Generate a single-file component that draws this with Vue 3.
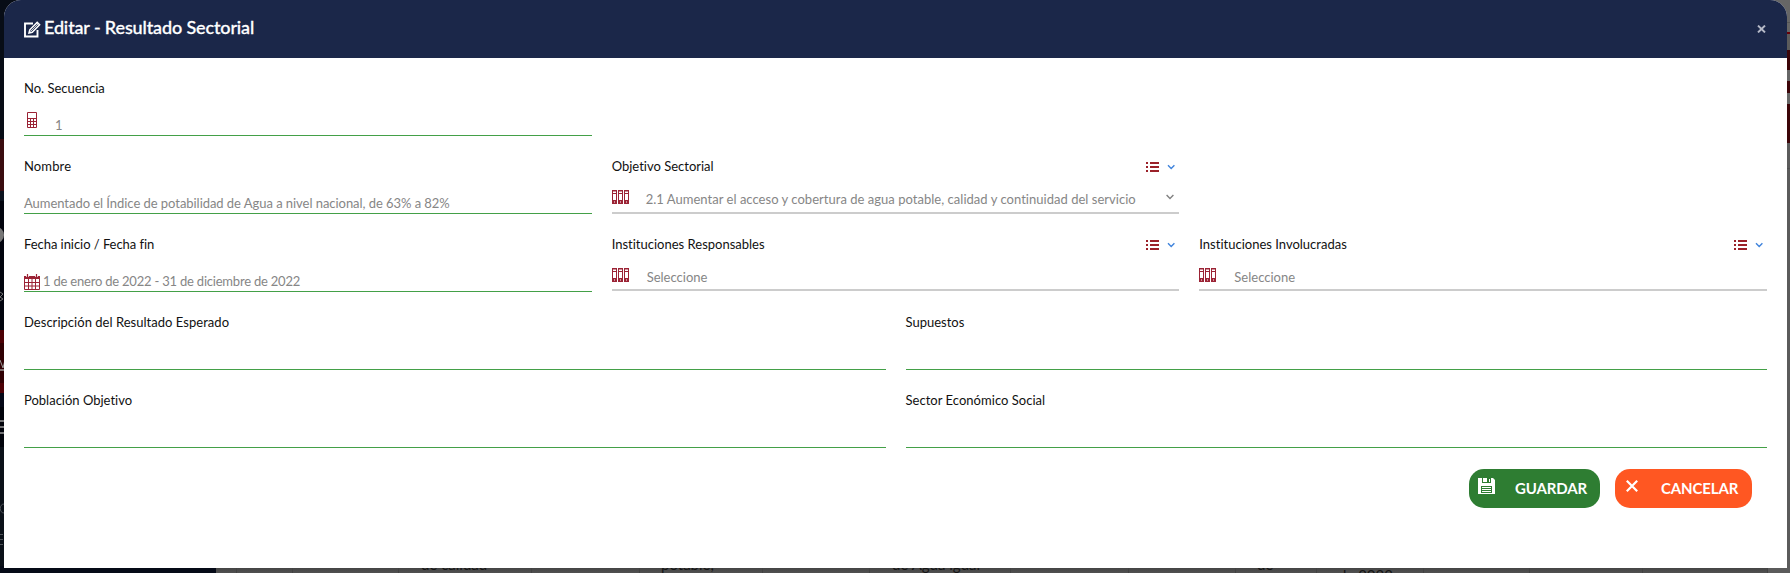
<script setup>
import { h } from 'vue'

const cells = [
  { left: 20 }, { left: 76 }, { left: 182, text: 'de calidad', tx: 205 },
  { left: 315 }, { left: 423, text: 'potable,', tx: 445 }, { left: 546 }, { left: 653, text: 'de Agua igual', tx: 676 },
  { left: 794 }, { left: 912 }, { left: 1019, text: 'de', tx: 1041 }, { left: 1100 },
  { left: 1207 }, { left: 1313 }, { left: 1426 }, { left: 1551 }
]

const Binders = () =>
  h('svg', { viewBox: '0 0 18 15', width: 18, height: 15, fill: 'none', stroke: '#9b2335' },
    [0, 6, 12].map((x) => h('g', { transform: `translate(${x} 0)` }, [
      h('rect', { x: 0.5, y: 0.5, width: 4, height: 13 }),
      h('path', { d: 'M.5 1h4M.5 3.5h4' }),
      h('rect', { x: 0.5, y: 10.5, width: 4, height: 3, fill: '#9b2335' }),
      h('rect', { x: 2, y: 11.5, width: 1, height: 1, fill: '#fff', stroke: 'none' })
    ])))

const ListMenu = () =>
  h('svg', { viewBox: '0 0 32 12', width: 32, height: 12 }, [
    h('path', { d: 'M0 1h2v2H0zM4 1h9v2H4zM0 5h2v2H0zM4 5h9v2H4zM0 9h2v2H0zM4 9h9v2H4z', fill: '#9b2129' }),
    h('path', { d: 'M22 4.3l3.2 3.2 3.2-3.2', fill: 'none', stroke: '#3f83dc', 'stroke-width': 1.4 })
  ])
</script>

<template>
  <div class="page">
    <div class="side-strip">
      <svg width="4" height="573" viewBox="0 0 4 573" fill="none" stroke="#777">
        <circle cx="-4" cy="235" r="8" fill="#777" stroke="none" />
        <path d="M0 292l3 2-3 3 3 2-3 2" />
        <path d="M0 360l3 8 2-8" stroke="#999" />
        <path d="M0 370h4M0 421h4M0 427h4M0 433h4" stroke="#999" stroke-width="1.5" />
        <path d="M4 504c-5 0-5 9 0 9M0 534.5h3M0 539.5h3M0 544.5h3" stroke="#50545a" />
      </svg>
    </div>
    <div class="table-strip">
      <i v-for="c in cells" :key="c.left" :style="{ left: c.left + 'px' }"></i>
      <template v-for="c in cells" :key="'t' + c.left">
        <span v-if="c.text" :style="{ left: c.tx + 'px' }">{{ c.text }}</span>
      </template>
      <span class="year">de 2022</span>
    </div>
    <div class="right-strip"></div>

    <section class="modal">
      <header>
        <svg class="edit" viewBox="0 0 17 17" width="17" height="17" fill="none" stroke="#fff">
          <path d="M9 2.500H1v13h12.500V9" stroke-width="1.900" />
          <path d="M5 12l.8-3.200 7.400-7.400 2.400 2.400-7.400 7.400z" stroke-width="1.500" />
          <path d="M6.500 10.500l7.500-7.500" stroke-width=".8" />
        </svg>
        <h1>Editar - Resultado Sectorial</h1>
        <svg class="close" viewBox="0 0 9 8" width="9" height="8"><path d="M1 .6l7 6.8M8 .6L1 7.400" stroke="#b4b8c6" stroke-width="2" /></svg>
      </header>

      <main>
        <div class="field third first">
          <label class="l1">No. Secuencia</label>
          <div class="control">
            <svg class="calc" viewBox="0 0 11 16" width="11" height="16" fill="none" stroke="#9b2335">
              <path d="M.5.5h9v15h-9zM.5 6.500h9M.5 9.500h9M.5 12.500h9M3.500 6.500v9M6.500 6.500v9" />
            </svg>
            <span>1</span>
          </div>
        </div>
        <div class="field third start">
          <label class="l2">Nombre</label>
          <div class="control"><span class="v1">Aumentado el Índice de potabilidad de Agua a nivel nacional, de 63% a 82%</span></div>
        </div>
        <div class="field third">
          <label>Objetivo Sectorial</label><ListMenu class="menu" />
          <div class="control select">
            <Binders class="binders" /><span class="v2">2.1 Aumentar el acceso y cobertura de agua potable, calidad y continuidad del servicio</span>
            <svg class="caret" viewBox="0 0 8 6" width="8" height="6"><path d="M.6 1L4 4.400 7.400 1" fill="none" stroke="#808080" stroke-width="1.400" /></svg>
          </div>
        </div>
        <div class="field third start">
          <label class="l4">Fecha inicio / Fecha fin</label>
          <div class="control">
            <svg class="cal" viewBox="0 0 16 16" width="16" height="16" fill="none" stroke="#9b2335">
              <path d="M.5 4.500h15v11H.5zM.5 8.500h15M.5 12h15M4.500 5v10M8 5v10M11.500 5v10" />
              <path d="M0 2h16v3H0z" fill="#9b2335" stroke="none" />
              <path d="M3.500 0v3M12.500 0v3" stroke="#fff" stroke-width="2.600" />
              <path d="M3.500 0v3M12.500 0v3" stroke-width="1.200" />
            </svg>
            <span class="v3">1 de enero de 2022 - 31 de diciembre de 2022</span>
          </div>
        </div>
        <div class="field third">
          <label>Instituciones Responsables</label><ListMenu class="menu" />
          <div class="control select empty"><Binders class="binders" /><span class="v4">Seleccione</span></div>
        </div>
        <div class="field third">
          <label>Instituciones Involucradas</label><ListMenu class="menu" />
          <div class="control select empty"><Binders class="binders" /><span class="v4">Seleccione</span></div>
        </div>
        <div class="field half"><label class="l7">Descripción del Resultado Esperado</label><div class="control"></div></div>
        <div class="field half"><label>Supuestos</label><div class="control"></div></div>
        <div class="field half"><label>Población Objetivo</label><div class="control"></div></div>
        <div class="field half"><label class="l7">Sector Económico Social</label><div class="control"></div></div>
      </main>

      <footer>
        <button class="save">
          <svg viewBox="0 0 17 16" width="17" height="16">
            <path d="M0 0h15l2 2v14H0z" fill="#fff" /><path d="M4 0h9v5H4zM3 8h11v7H3z" fill="#2e7d32" /><path d="M5 0h4v4H5zM11 1h1v3h-1zM4 9h9v1H4zM4 11h9v1H4zM4 13h9v1H4z" fill="#fff" />
          </svg>
          <span>GUARDAR</span>
        </button>
        <button class="cancel">
          <svg viewBox="0 0 12 12" width="12" height="12"><path d="M.8.8l10.400 10.400M11.200.8L.8 11.200" stroke="#fff" stroke-width="2.200" /></svg>
          <span>CANCELAR</span>
        </button>
      </footer>
    </section>
  </div>
</template>

<style>
body { margin: 0; overflow: hidden; }
</style>

<style scoped>
.page { position: relative; width: 1790px; height: 573px; overflow: hidden; background: #4d4d4d; font-family: Lato, "Open Sans", sans-serif; font-variant-ligatures: none; box-sizing: border-box; padding: 0 3px 5px 4px; }
.side-strip { position: absolute; left: 0; top: 0; width: 216px; height: 573px; background: linear-gradient(#080d16 0 139px, #3a0d10 139px 191px, #0c131e 191px 201px, #02040e 201px 330px, #4c0005 330px 343px, #300003 343px 383px, #4c0005 383px 393px, #050817 393px 407px, #01030b 407px 447px, #0b1119 447px 566px, #050a17 566px); }
.table-strip { position: absolute; left: 216px; right: 0; top: 0; bottom: 0; background: linear-gradient(#4d4d4d 567px, #444 568px, #515151 573px); overflow: hidden; }
.table-strip i { position: absolute; top: 0; bottom: 0; width: 1px; background: #424242; }
.table-strip span { position: absolute; top: 556px; font-size: 15px; line-height: 17px; color: #151515; white-space: nowrap; }
.table-strip .year { left: 1122px; top: 567px; }
.right-strip { position: absolute; right: 0; top: 0; width: 22px; height: 573px; background: linear-gradient(#666 0 22px, #555 22px 23px, #666 23px 32px, #6a0008 32px 34px, #5b5b5b 34px 50px, #3c0508 50px 70px, #666 70px 81px, #3c0508 81px 93px, #666 93px 104px, #3c0508 104px 143px, #5b5b5b 143px 168px, #505050 168px 169px, #5b5b5b 169px); }
.modal { position: relative; height: 568px; background: #fff; border-radius: 17px 17px 0 0; overflow: hidden; display: flex; flex-direction: column; }
header { height: 58px; background: #1b2749; display: flex; align-items: center; padding: 0 20px; box-sizing: border-box; flex: none; }
.edit { margin: 1px 3px 0 0; flex: none; }
h1 { margin: -4px auto 0 0; color: #fff; font-size: 18px; line-height: 24px; font-weight: 500; letter-spacing: -.13px; -webkit-text-stroke: .3px #fff; white-space: nowrap; }
.close { margin-right: 1px; }
main { display: grid; grid-template-columns: repeat(6, minmax(0, 1fr)); column-gap: 20px; grid-auto-rows: 78px; padding: 0 20px; }
.field { display: flex; flex-wrap: wrap; align-content: flex-start; justify-content: space-between; padding-top: 21px; box-sizing: border-box; }
.third { grid-column: span 2; }
.start, .first { grid-column: 1 / span 2; }
.half { grid-column: span 3; }
label { font-size: 13px; line-height: 18px; color: #111; white-space: nowrap; }
.l2 { letter-spacing: .12px; }
.l4 { letter-spacing: -.05px; }
.l7 { letter-spacing: .03px; }
.menu { margin: 4px 1px 0 0; }
.control { width: 100%; height: 39px; box-sizing: border-box; border-bottom: 1px solid #43a047; display: flex; align-items: flex-end; font-size: 13px; line-height: 18px; color: #868686; white-space: nowrap; }
.control > span { padding-bottom: 1px; }
.calc { margin: 0 17px 7px 3px; }
.cal { margin: 0 3px 1px 0; }
.v1 { letter-spacing: -.047px; }
.v2 { letter-spacing: .026px; }
.v3 { letter-spacing: -.21px; }
.select { border-bottom: 2px solid #ccc; align-items: flex-start; padding-top: 15px; }
.binders { margin-right: 16px; flex: none; }
.caret { margin: 4px 5px 0 auto; }
.empty { height: 38px; }
.empty .v4 { padding: 0 0 0 1px; }
footer { display: flex; justify-content: flex-end; gap: 15px; padding: 21px 35px 0 0; }
button { height: 39px; border: 0; border-radius: 15px; padding: 0; color: #fff; font: 700 15px/20px Lato, sans-serif; letter-spacing: -.12px; display: flex; align-items: flex-start; }
button span { margin-top: 9px; }
.save { width: 131px; background: #2e7d32; }
.save svg { margin: 9px 20px 0 9px; }
.cancel { width: 137px; background: #ff5722; }
.cancel svg { margin: 11px 23px 0 11px; }
</style>
